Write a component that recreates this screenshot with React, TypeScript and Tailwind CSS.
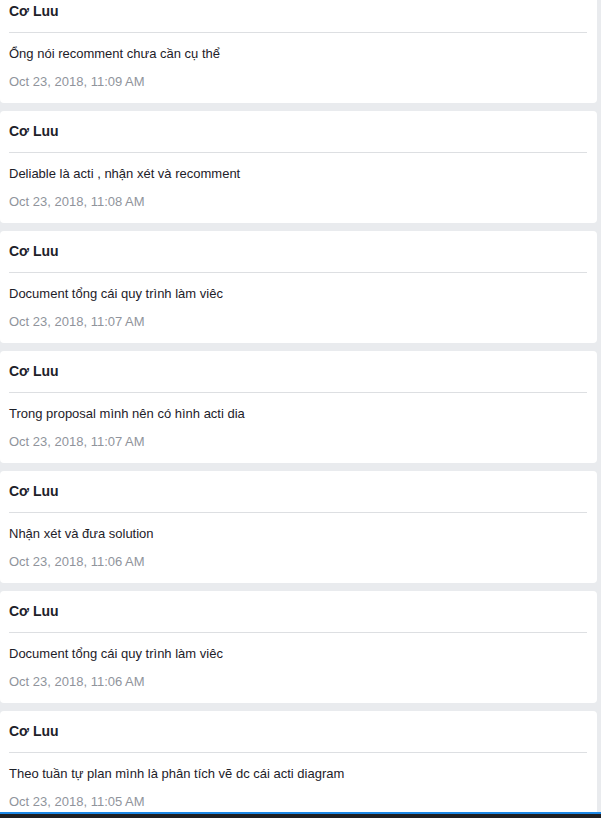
const messages = [
  { author: 'Cơ Luu', text: 'Ổng nói recomment chưa cần cụ thể', time: 'Oct 23, 2018, 11:09 AM' },
  { author: 'Cơ Luu', text: 'Deliable là acti , nhận xét và recomment', time: 'Oct 23, 2018, 11:08 AM' },
  { author: 'Cơ Luu', text: 'Document tổng cái quy trình làm viêc', time: 'Oct 23, 2018, 11:07 AM' },
  { author: 'Cơ Luu', text: 'Trong proposal mình nên có hình acti dia', time: 'Oct 23, 2018, 11:07 AM' },
  { author: 'Cơ Luu', text: 'Nhận xét và đưa solution', time: 'Oct 23, 2018, 11:06 AM' },
  { author: 'Cơ Luu', text: 'Document tổng cái quy trình làm viêc', time: 'Oct 23, 2018, 11:06 AM' },
  { author: 'Cơ Luu', text: 'Theo tuần tự plan mình là phân tích vẽ dc cái acti diagram', time: 'Oct 23, 2018, 11:05 AM' },
];

export default function App() {
  return (
    <div className="h-[818px] overflow-hidden bg-[#e9ebee] font-['Liberation_Sans',Arial,sans-serif]">
      <div className="-mt-[9px] flex flex-col gap-2 pr-1">
        {messages.map((m, i) => (
          <div key={i} className="h-[112px] rounded bg-white pl-[9px] pr-[10px] pt-3">
            <div className="text-[14px] font-bold leading-4 text-[#1d2129]">{m.author}</div>
            <div className="mt-[13px] h-px bg-[#dddfe2]" />
            <div className="mt-[13px] text-[13px] leading-4 text-[#1d2129]">{m.text}</div>
            <div className="mt-3 text-[13px] leading-4 text-[#90949c]">{m.time}</div>
          </div>
        ))}
      </div>
      {/* bottom bar */}
      <div className="fixed bottom-0 left-0 right-0 h-[6px] border-t-2 border-[#1e88e5] bg-[#1f1f22]" />
    </div>
  );
}
